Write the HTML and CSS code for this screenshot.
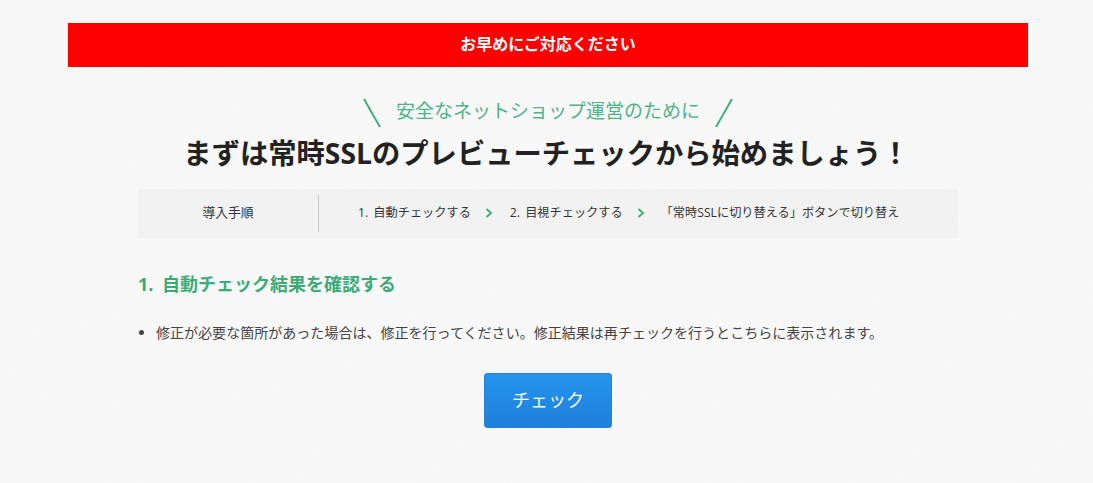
FILE: index.html
```html
<!DOCTYPE html>
<html lang="ja">
<head>
<meta charset="utf-8">
<title>常時SSL</title>
<link rel="stylesheet" href="styles.css">
</head>
<body>
<div class="page">
  <div class="alert">お早めにご対応ください</div>
  <div class="lead">
    <svg class="slash" width="18" height="30" viewBox="0 0 18 30"><path d="M1 1 L17 29" /></svg>
    <span class="lead-text">安全なネットショップ運営のために</span>
    <svg class="slash" width="18" height="30" viewBox="0 0 18 30"><path d="M17 1 L1 29" /></svg>
  </div>
  <h1 class="title">まずは常時SSLのプレビューチェックから始めましょう！</h1>
  <div class="inner">
    <div class="steps">
      <div class="steps-label">導入手順</div>
      <div class="steps-list">
        <span class="step">1. 自動チェックする</span>
        <svg class="chev" width="8" height="10" viewBox="0 0 8 10"><path d="M1.5 1 L6 5 L1.5 9" /></svg>
        <span class="step">2. 目視チェックする</span>
        <svg class="chev" width="8" height="10" viewBox="0 0 8 10"><path d="M1.5 1 L6 5 L1.5 9" /></svg>
        <span class="step step-last">「常時SSLに切り替える」ボタンで切り替え</span>
      </div>
    </div>
    <h2 class="section">1. 自動チェック結果を確認する</h2>
    <ul class="notes">
      <li>修正が必要な箇所があった場合は、修正を行ってください。修正結果は再チェックを行うとこちらに表示されます。</li>
    </ul>
    <div class="actions"><button class="btn" type="button">チェック</button></div>
  </div>
</div>
</body>
</html>
```

FILE: styles.css
```css
* { box-sizing: border-box; }
html, body { margin: 0; padding: 0; }
body {
  background-color: #f8f8f8;
  background-image: url("data:image/svg+xml,%3Csvg xmlns='http://www.w3.org/2000/svg' width='300' height='300'%3E%3Cfilter id='n'%3E%3CfeTurbulence type='fractalNoise' baseFrequency='0.7' numOctaves='2' stitchTiles='stitch'/%3E%3CfeColorMatrix values='0 0 0 0 0.6 0 0 0 0 0.6 0 0 0 0 0.6 0 0 0 0.1 0'/%3E%3C/filter%3E%3Crect width='300' height='300' fill='%23fafafa'/%3E%3Crect width='300' height='300' filter='url(%23n)'/%3E%3C/svg%3E");
  color: #333;
  font-family: "Open Sans", "Noto Sans CJK JP", "Noto Sans", sans-serif;
  height: 483px;
  overflow: hidden;
}
.page {
  width: 960px;
  margin-left: 68px;
  padding-top: 23px;
}
.alert {
  height: 44px;
  background: #ff0000;
  color: #fff;
  font-size: 16px;
  font-weight: 700;
  line-height: 42px;
  text-align: center;
}
.lead {
  display: flex;
  justify-content: center;
  align-items: center;
  gap: 15px;
  margin-top: 30px;
  height: 32px;
  color: #4fb388;
  font-size: 19px;
}
.slash { fill: none; stroke: #45ae7f; stroke-width: 2; }
.lead-text { line-height: 26px; padding-bottom: 4px; }
.title {
  margin: 4px 0 0;
  padding-right: 3px;
  height: 40px;
  font-size: 28.3px;
  line-height: 40px;
  font-weight: 700;
  color: #222;
  text-align: center;
}
.inner {
  width: 820px;
  margin: 16px 0 0 70px;
}
.steps {
  display: flex;
  align-items: center;
  height: 49px;
  background: #f2f2f2;
  font-size: 12px;
  color: #333;
}
.steps-label {
  width: 181px;
  height: 37px;
  line-height: 35px;
  text-align: center;
  border-right: 1px solid #c8c8c8;
  font-size: 12.8px;
}
.steps-list {
  display: flex;
  align-items: center;
  padding-left: 39px;
  padding-bottom: 3px;
  font-size: 12.2px;
  word-spacing: 2px;
}
.chev { fill: none; stroke: #45ae7f; stroke-width: 2; margin: 2px 17px 0 14px; }
.step-last { margin-left: -1px; }
.section {
  margin: 32px 0 0;
  font-size: 18px;
  word-spacing: 4px;
  line-height: 28px;
  font-weight: 700;
  color: #3dab78;
}
.notes {
  margin: 23px 0 0;
  padding: 0 0 0 18px;
  font-size: 14.04px;
  line-height: 24px;
  color: #444;
}
.actions {
  display: flex;
  justify-content: center;
  margin-top: 28px;
}
.btn {
  width: 128px;
  height: 55px;
  border: 1px solid #2484dc;
  border-radius: 3px;
  background: linear-gradient(#2594ee, #1f80da);
  color: #fff;
  font-family: inherit;
  font-size: 18px;
  padding: 0 0 3px;
}
```
